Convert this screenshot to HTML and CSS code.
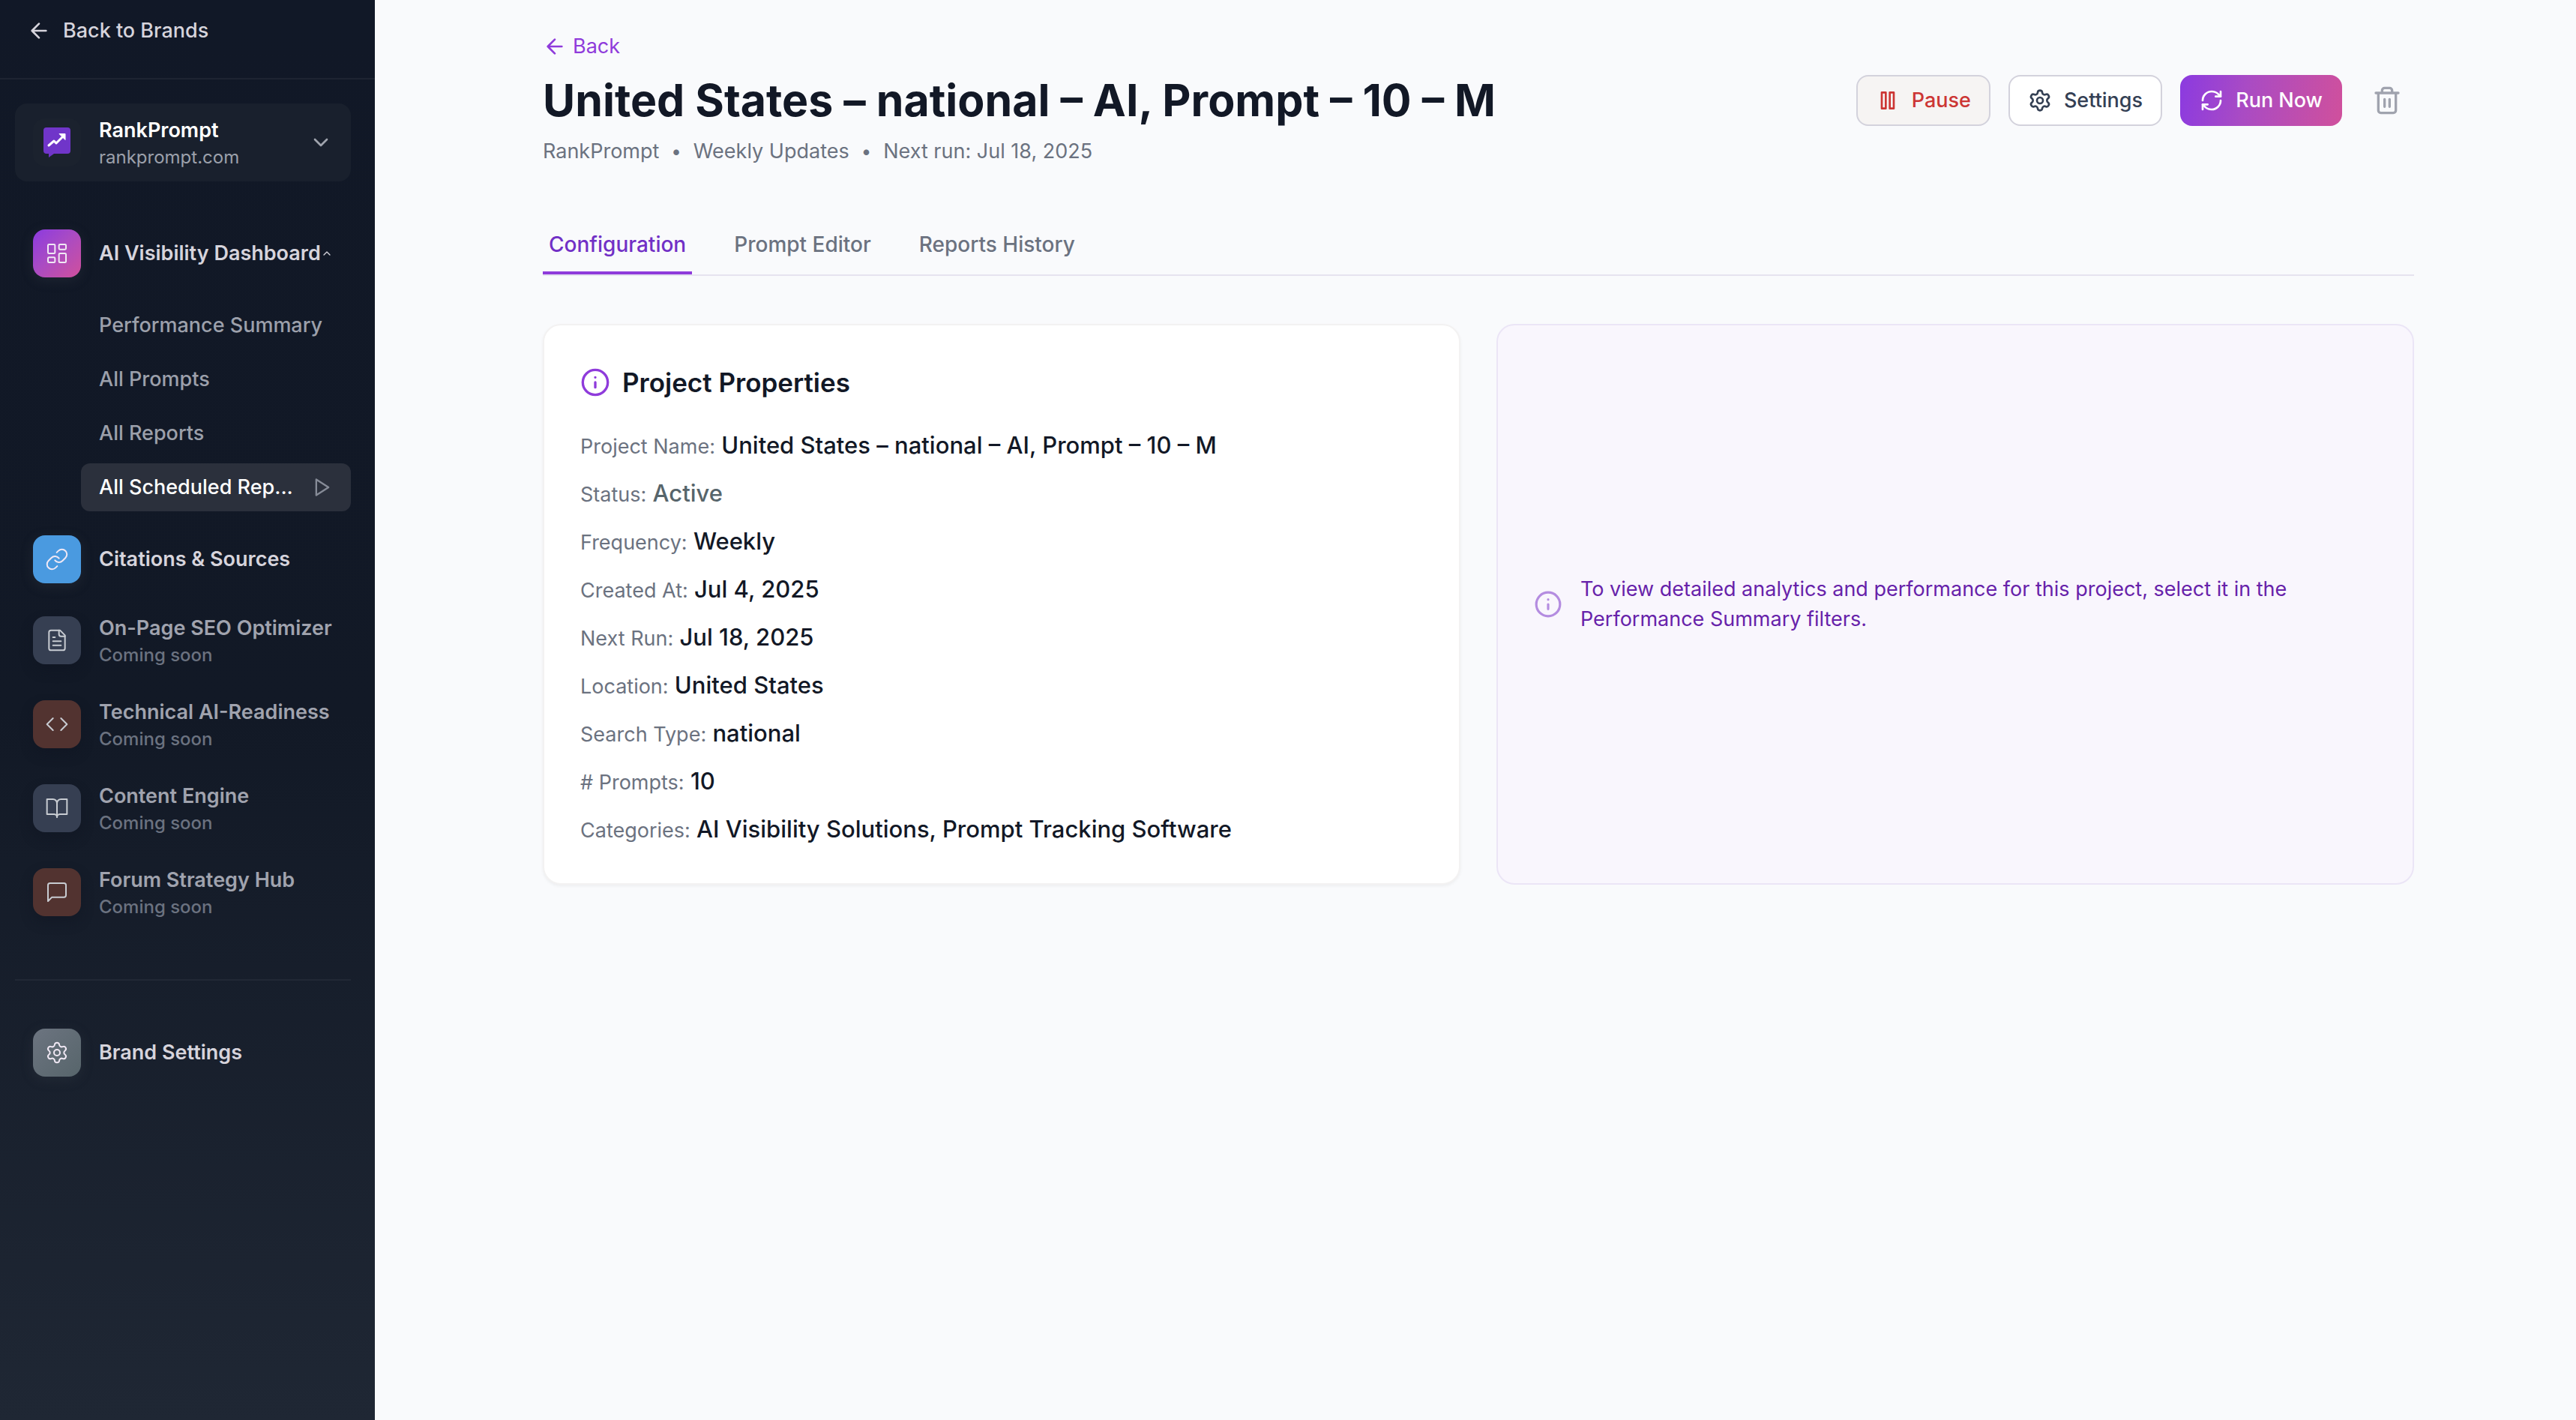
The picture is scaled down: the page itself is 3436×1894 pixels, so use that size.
FILE: index.html
```html
<!DOCTYPE html>
<html lang="en">
<head>
    <meta charset="UTF-8">
    <meta name="viewport" content="width=device-width, initial-scale=1.0">
    <title>RankPrompt</title>
    <link rel="stylesheet" href="styles.css">
</head>
<body>
    <div class="layout">
        <aside class="sidebar">
            <a href="#" class="back-brands">
                <svg class="icon" viewBox="0 0 24 24"><path d="M12 19l-7-7 7-7M19 12H5"/></svg>
                Back to Brands
            </a>

            <div class="sidebar-body">
                <button type="button" class="brand">
                    <span class="brand-logo">
                        <svg width="40" height="40" viewBox="0 0 40 40">
                            <path d="M6 0h28a4 4 0 0 1 4 4v27a4 4 0 0 1-4 4H16l-7 5v-5H6a4 4 0 0 1-4-4V4a4 4 0 0 1 4-4z" fill="#7035c9"/>
                            <path d="M9 24l7-6 3 3 8-8" fill="none" stroke="#fff" stroke-width="3" stroke-linecap="round" stroke-linejoin="round"/>
                            <path d="M23 8.5h8v8z" fill="#fff" stroke="#fff" stroke-linejoin="round"/>
                        </svg>
                    </span>
                    <span class="nav-text">
                        <span class="brand-name">RankPrompt</span>
                        <span class="brand-domain">rankprompt.com</span>
                    </span>
                    <svg class="icon chevron" viewBox="0 0 24 24"><path d="M6 9l6 6 6-6"/></svg>
                </button>

                <nav class="nav">
                    <a href="#" class="nav-item">
                        <span class="tile tile-dashboard">
                            <svg class="icon thin" viewBox="0 0 24 24"><rect x="3" y="3" width="7" height="9" rx="1"/><rect x="14" y="3" width="7" height="5" rx="1"/><rect x="14" y="12" width="7" height="9" rx="1"/><rect x="3" y="16" width="7" height="5" rx="1"/></svg>
                        </span>
                        <span class="nav-text">AI Visibility Dashboard</span>
                        <svg class="icon caret" viewBox="0 0 24 24"><path d="M18 15l-6-6-6 6"/></svg>
                    </a>
                    <div class="subnav">
                        <a href="#" class="subnav-item">Performance Summary</a>
                        <a href="#" class="subnav-item">All Prompts</a>
                        <a href="#" class="subnav-item">All Reports</a>
                        <a href="#" class="subnav-item active">
                            All Scheduled Rep...
                            <svg class="icon play" viewBox="0 0 24 24"><path d="M5 3l14 9-14 9z"/></svg>
                        </a>
                    </div>
                    <a href="#" class="nav-item">
                        <span class="tile tile-citations">
                            <svg class="icon thin" viewBox="0 0 24 24"><path d="M10 13a5 5 0 0 0 7.54.54l3-3a5 5 0 0 0-7.07-7.07l-1.72 1.71"/><path d="M14 11a5 5 0 0 0-7.54-.54l-3 3a5 5 0 0 0 7.07 7.07l1.71-1.71"/></svg>
                        </span>
                        <span class="nav-text">Citations &amp; Sources</span>
                    </a>
                    <a href="#" class="nav-item soon">
                        <span class="tile tile-slate">
                            <svg class="icon thin" viewBox="0 0 24 24"><path d="M15 2H6a2 2 0 0 0-2 2v16a2 2 0 0 0 2 2h12a2 2 0 0 0 2-2V7z"/><path d="M14 2v4a2 2 0 0 0 2 2h4M10 9H8M16 13H8M16 17H8"/></svg>
                        </span>
                        <span class="nav-text">On-Page SEO Optimizer <small>Coming soon</small></span>
                    </a>
                    <a href="#" class="nav-item soon">
                        <span class="tile tile-brown">
                            <svg class="icon thin" viewBox="0 0 24 24"><path d="M16 18l6-6-6-6M8 6l-6 6 6 6"/></svg>
                        </span>
                        <span class="nav-text">Technical AI-Readiness <small>Coming soon</small></span>
                    </a>
                    <a href="#" class="nav-item soon">
                        <span class="tile tile-slate">
                            <svg class="icon thin" viewBox="0 0 24 24"><path d="M2 3h6a4 4 0 0 1 4 4v14a3 3 0 0 0-3-3H2z"/><path d="M22 3h-6a4 4 0 0 0-4 4v14a3 3 0 0 1 3-3h7z"/></svg>
                        </span>
                        <span class="nav-text">Content Engine <small>Coming soon</small></span>
                    </a>
                    <a href="#" class="nav-item soon">
                        <span class="tile tile-brown">
                            <svg class="icon thin" viewBox="0 0 24 24"><path d="M21 15a2 2 0 0 1-2 2H7l-4 4V5a2 2 0 0 1 2-2h14a2 2 0 0 1 2 2z"/></svg>
                        </span>
                        <span class="nav-text">Forum Strategy Hub <small>Coming soon</small></span>
                    </a>
                </nav>

                <nav class="nav-bottom">
                    <a href="#" class="nav-item">
                        <span class="tile tile-settings">
                            <svg class="icon thin" viewBox="0 0 24 24"><path d="M9.671 4.136a2.34 2.34 0 0 1 4.659 0 2.34 2.34 0 0 0 3.319 1.915 2.34 2.34 0 0 1 2.33 4.033 2.34 2.34 0 0 0 0 3.831 2.34 2.34 0 0 1-2.33 4.033 2.34 2.34 0 0 0-3.319 1.915 2.34 2.34 0 0 1-4.659 0 2.34 2.34 0 0 0-3.32-1.915 2.34 2.34 0 0 1-2.33-4.033 2.34 2.34 0 0 0 0-3.831A2.34 2.34 0 0 1 6.35 6.051a2.34 2.34 0 0 0 3.319-1.915"/><circle cx="12" cy="12" r="3"/></svg>
                        </span>
                        <span class="nav-text">Brand Settings</span>
                    </a>
                </nav>
            </div>
        </aside>

        <main class="main">
            <div class="container">
                <a href="#" class="back-link">
                    <svg class="icon" viewBox="0 0 24 24"><path d="M12 19l-7-7 7-7M19 12H5"/></svg>
                    Back
                </a>
                <header class="page-header">
                    <h1>United States – national – AI, Prompt – 10 – M</h1>
                    <div class="actions">
                        <button type="button" class="btn btn-pause">
                            <svg class="icon" viewBox="0 0 24 24"><path d="M6 4h4v16H6zM14 4h4v16h-4z"/></svg>
                            Pause
                        </button>
                        <button type="button" class="btn btn-settings">
                            <svg class="icon" viewBox="0 0 24 24"><path d="M9.671 4.136a2.34 2.34 0 0 1 4.659 0 2.34 2.34 0 0 0 3.319 1.915 2.34 2.34 0 0 1 2.33 4.033 2.34 2.34 0 0 0 0 3.831 2.34 2.34 0 0 1-2.33 4.033 2.34 2.34 0 0 0-3.319 1.915 2.34 2.34 0 0 1-4.659 0 2.34 2.34 0 0 0-3.32-1.915 2.34 2.34 0 0 1-2.33-4.033 2.34 2.34 0 0 0 0-3.831A2.34 2.34 0 0 1 6.35 6.051a2.34 2.34 0 0 0 3.319-1.915"/><circle cx="12" cy="12" r="3"/></svg>
                            Settings
                        </button>
                        <button type="button" class="btn btn-run">
                            <svg class="icon" viewBox="0 0 24 24"><path d="M3 12a9 9 0 0 1 9-9 9.75 9.75 0 0 1 6.74 2.74L21 8"/><path d="M21 3v5h-5"/><path d="M21 12a9 9 0 0 1-9 9 9.75 9.75 0 0 1-6.74-2.74L3 16"/><path d="M8 16H3v5"/></svg>
                            Run Now
                        </button>
                        <button type="button" class="btn-delete" aria-label="Delete">
                            <svg class="icon icon-lg" viewBox="0 0 24 24"><path d="M3 6h18M19 6v14a2 2 0 0 1-2 2H7a2 2 0 0 1-2-2V6M8 6V4a2 2 0 0 1 2-2h4a2 2 0 0 1 2 2v2M10 11v6M14 11v6"/></svg>
                        </button>
                    </div>
                </header>
                <div class="meta">
                    <span>RankPrompt</span>
                    <span class="dot">•</span>
                    <span>Weekly Updates</span>
                    <span class="dot">•</span>
                    <span>Next run: Jul 18, 2025</span>
                </div>

                <div class="tabs">
                    <button type="button" class="tab active">Configuration</button>
                    <button type="button" class="tab">Prompt Editor</button>
                    <button type="button" class="tab">Reports History</button>
                </div>

                <div class="cards">
                    <section class="card">
                        <h2>
                            <svg class="icon icon-lg" viewBox="0 0 24 24"><circle cx="12" cy="12" r="10"/><path d="M12 16v-4M12 8h.01"/></svg>
                            Project Properties
                        </h2>
                        <ul class="properties">
                            <li><span>Project Name:</span> United States – national – AI, Prompt – 10 – M</li>
                            <li class="status"><span>Status:</span> Active</li>
                            <li><span>Frequency:</span> Weekly</li>
                            <li><span>Created At:</span> Jul 4, 2025</li>
                            <li><span>Next Run:</span> Jul 18, 2025</li>
                            <li><span>Location:</span> United States</li>
                            <li><span>Search Type:</span> national</li>
                            <li><span># Prompts:</span> 10</li>
                            <li><span>Categories:</span> AI Visibility Solutions, Prompt Tracking Software</li>
                        </ul>
                    </section>
                    <section class="card card-info">
                        <svg class="icon" viewBox="0 0 24 24"><circle cx="12" cy="12" r="10"/><path d="M12 16v-4M12 8h.01"/></svg>
                        <p>To view detailed analytics and performance for this project, select it in the Performance Summary filters.</p>
                    </section>
                </div>
            </div>
        </main>
    </div>
</body>
</html>
```
FILE: styles.css
```css
* {
    box-sizing: border-box;
}

body {
    margin: 0;
    font-family: Inter, "Liberation Sans", sans-serif;
    font-size: 27px;
    line-height: 40px;
    color: #111827;
    background: #f9fafc;
}

a {
    color: inherit;
    text-decoration: none;
}

button {
    font: inherit;
    color: inherit;
    background: none;
    border: 0;
    padding: 0;
}

.icon {
    width: 32px;
    height: 32px;
    flex-shrink: 0;
    fill: none;
    stroke: currentColor;
    stroke-width: 2;
    stroke-linecap: round;
    stroke-linejoin: round;
}

.icon.thin {
    stroke-width: 1.5;
}

.icon.icon-lg {
    width: 40px;
    height: 40px;
}

.layout {
    display: flex;
    min-height: 100vh;
}

/* Sidebar */
.sidebar {
    width: 500px;
    flex-shrink: 0;
    background: linear-gradient(to bottom, #111827 0%, #121926 50%, #1f2734 100%);
    color: #d6d4dc;
    font-weight: 500;
}

.back-brands {
    display: flex;
    align-items: center;
    gap: 16px;
    padding: 21px 36px 43px;
    border-bottom: 2px solid #1e2432;
}

.sidebar-body {
    padding: 32px 32px 32px 20px;
}

.brand {
    display: flex;
    align-items: center;
    gap: 24px;
    width: 100%;
    padding: 16px 24px;
    border-radius: 16px;
    background: #19202d;
    text-align: left;
}

.brand-logo {
    display: flex;
    align-items: center;
    justify-content: center;
    width: 64px;
    height: 64px;
    border-radius: 16px;
    background: #1b222e;
}

.nav-text {
    flex: 1;
    white-space: nowrap;
    font-weight: 600;
}

.brand-name {
    display: block;
    color: #fff;
}

.brand-domain {
    display: block;
    font-size: 24px;
    line-height: 32px;
    font-weight: 400;
    color: #9ca0ab;
}

.chevron {
    color: #a0a4ae;
}

.nav {
    display: flex;
    flex-direction: column;
    gap: 8px;
    margin-top: 48px;
}

.nav-item {
    display: flex;
    align-items: center;
    gap: 24px;
    padding: 16px 24px;
}

.tile {
    display: flex;
    align-items: center;
    justify-content: center;
    flex-shrink: 0;
    width: 64px;
    height: 64px;
    border-radius: 16px;
    color: #f0e8f4;
    box-shadow: 0 4px 16px rgba(60, 66, 76, 0.3);
}

.tile-dashboard {
    background: linear-gradient(135deg, #8b3ae0, #a94bc4 45%, #d0509c);
}

.tile-citations {
    background: #4a9ae0;
}

.tile-settings {
    background: linear-gradient(135deg, #6c7480, #57656b);
}

.tile-slate {
    background: #363f52;
}

.tile-brown {
    background: #523330;
}

.caret {
    width: 16px;
    height: 16px;
    margin-left: -24px;
}

.soon {
    color: #a0a3ae;
}

.soon .tile {
    color: #c8ccd2;
    box-shadow: 0 8px 16px rgba(14, 20, 32, 0.4);
}

.nav-text small {
    display: block;
    font-size: 24px;
    line-height: 32px;
    font-weight: 500;
    color: #6b7280;
}

.subnav {
    display: flex;
    flex-direction: column;
    gap: 8px;
    margin: 8px 0 8px 88px;
}

.subnav-item {
    display: flex;
    align-items: center;
    justify-content: space-between;
    padding: 12px 24px;
    border-radius: 12px;
    color: #9ca0ab;
    font-weight: 500;
    white-space: nowrap;
}

.subnav-item.active {
    color: #fff;
    background: #2b303c;
}

.play {
    width: 28px;
    height: 28px;
    color: #868b97;
}

.nav-bottom {
    margin-top: 64px;
    padding-top: 48px;
    border-top: 2px solid #212835;
}

/* Main */
.main {
    flex: 1;
    padding: 42px 32px 64px 40px;
}

.container {
    max-width: 2496px;
    margin: 0 auto;
}

.back-link {
    display: inline-flex;
    align-items: center;
    gap: 8px;
    color: #8f3bdb;
    vertical-align: top;
}

.page-header {
    display: flex;
    align-items: center;
    justify-content: space-between;
    gap: 48px;
    margin-top: 16px;
}

h1 {
    margin: 0;
    font-size: 59px;
    line-height: 72px;
    font-weight: 700;
    color: #121826;
}

.actions {
    display: flex;
    align-items: center;
    gap: 24px;
}

.btn {
    display: flex;
    align-items: center;
    gap: 16px;
    padding: 12px 24px;
    border: 2px solid #d3d2dc;
    border-radius: 16px;
    font-weight: 500;
}

.btn-pause {
    color: #cc3634;
    background: #f6f4f3;
}

.btn-settings {
    color: #344054;
    background: #fff;
}

.btn-run {
    color: #fff;
    border-color: transparent;
    background: linear-gradient(100deg, #8b3ae0, #a94bc4 40%, #d0509c) border-box;
}

.btn-delete {
    display: flex;
    padding: 16px;
    color: #a0a3ae;
}

.meta {
    display: flex;
    gap: 16px;
    margin-top: 12px;
    color: #6b7280;
}

.dot {
    font-size: 24px;
}

.tabs {
    display: flex;
    gap: 48px;
    margin-top: 68px;
    border-bottom: 2px solid #e6e3ef;
}

.tab {
    padding: 16px 8px;
    border-bottom: 4px solid transparent;
    font-size: 28px;
    font-weight: 500;
    color: #6b7280;
}

.tab.active {
    color: #7130c6;
    border-color: #8f3bdb;
}

.cards {
    display: grid;
    grid-template-columns: 1fr 1fr;
    gap: 48px;
    margin-top: 64px;
}

.card {
    padding: 48px;
    border: 2px solid #f3f2f2;
    border-radius: 24px;
    background: #fff;
    box-shadow: 0 2px 4px rgba(0, 0, 0, 0.05);
}

.card h2 {
    display: flex;
    align-items: center;
    gap: 16px;
    margin: 0 0 32px;
    font-size: 35px;
    line-height: 56px;
    font-weight: 600;
    color: #121826;
}

.card h2 .icon {
    color: #8f3bdb;
}

.properties {
    display: flex;
    flex-direction: column;
    gap: 16px;
    margin: 0;
    padding: 0;
    list-style: none;
    font-size: 31px;
    line-height: 48px;
    font-weight: 500;
    color: #121826;
}

.properties span {
    font-size: 27px;
    line-height: 40px;
    font-weight: 400;
    color: #6b7280;
}

.properties .status {
    color: #57656b;
}

.card-info {
    display: flex;
    align-items: center;
    gap: 24px;
    color: #6722aa;
    background: #f9f6fd;
    border-color: #ebe5f6;
    box-shadow: none;
}

.card-info .icon {
    width: 38px;
    height: 38px;
    color: #b48ce0;
}

.card-info p {
    margin: 0;
}
```
